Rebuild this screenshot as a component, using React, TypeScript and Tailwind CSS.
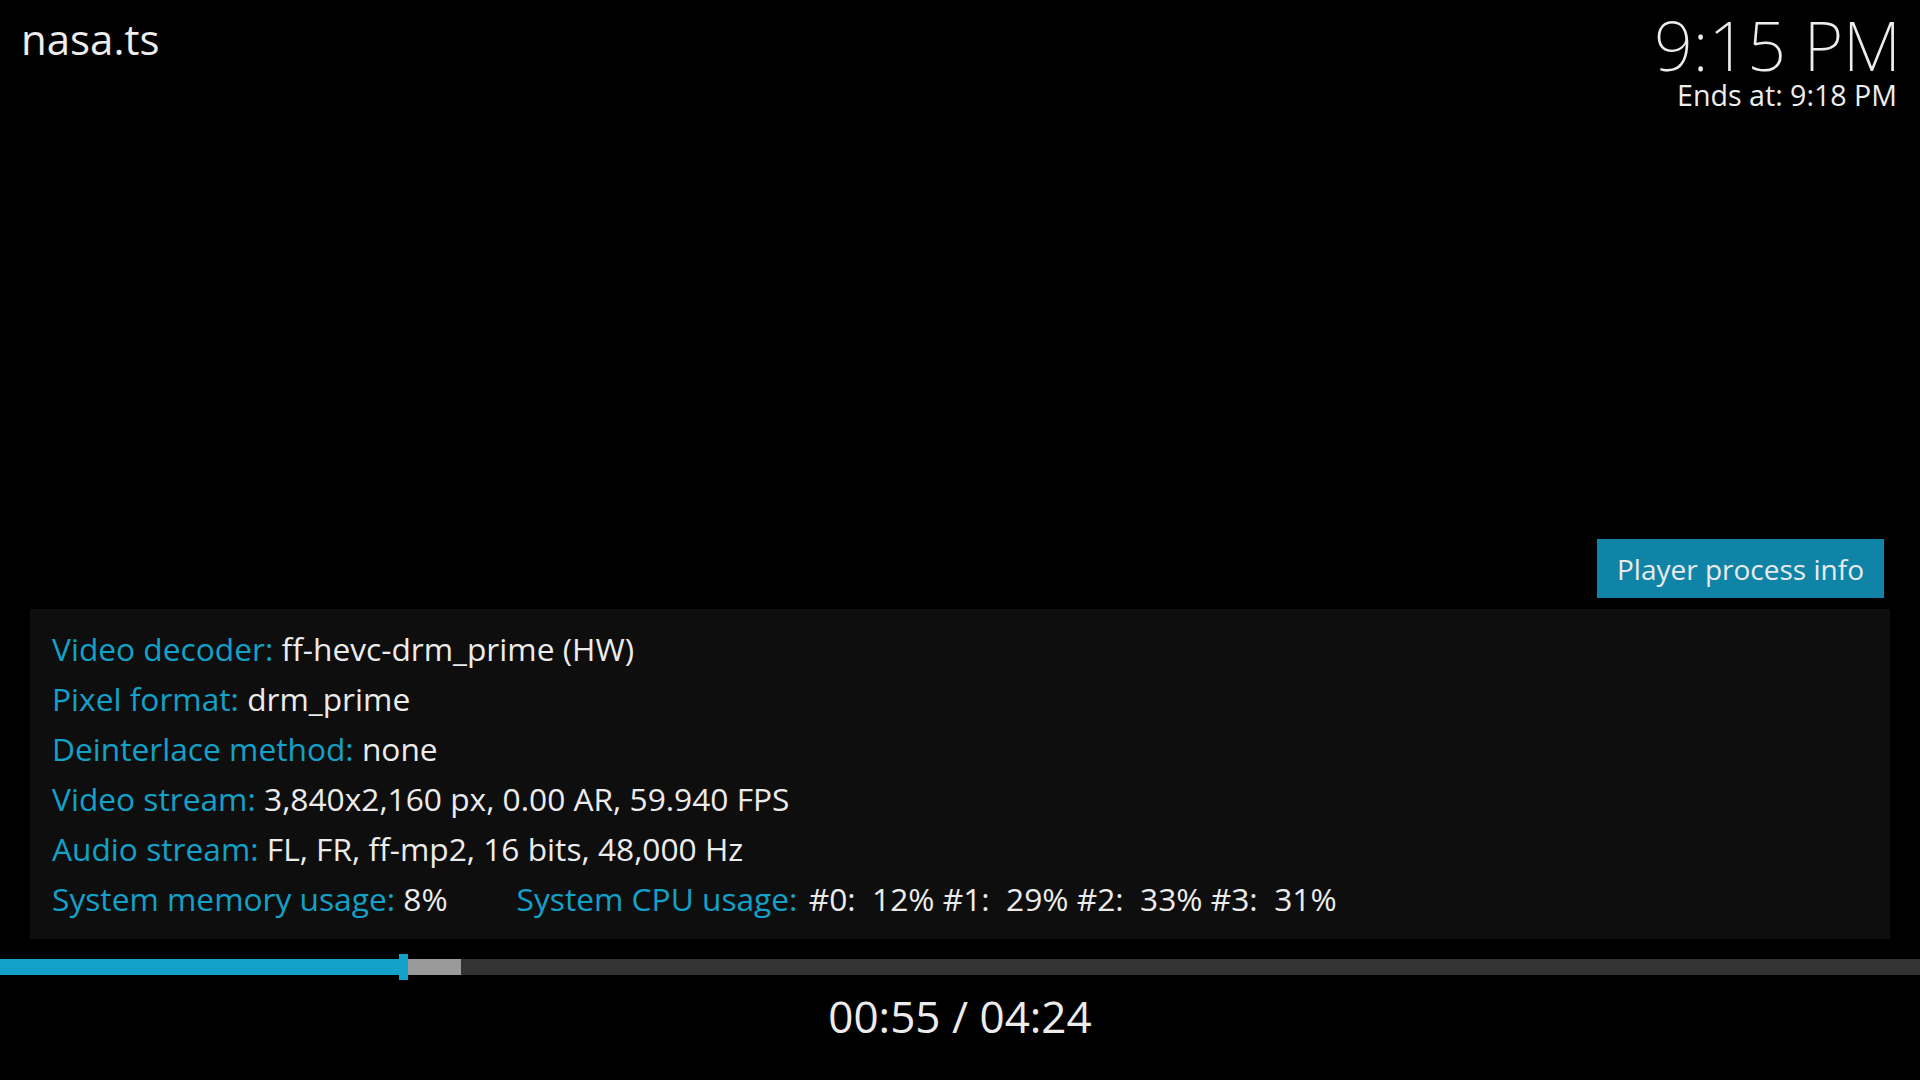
import React from "react";

const font = { fontFamily: '"Open Sans", "Noto Sans", sans-serif' };
const thin = { fontFamily: '"Noto Sans", "Open Sans", sans-serif' };

function Row({ label, value }: { label: string; value: string }) {
  return (
    <div className="h-[50px] flex items-center whitespace-pre">
      <span className="text-[#12a1c9]">{label}</span>
      <span className="text-[#ececec]"> {value}</span>
    </div>
  );
}

export default function App() {
  return (
    <div
      className="w-[1920px] h-[1080px] bg-black flex flex-col overflow-hidden"
      style={font}
    >
      <div className="flex justify-between items-start">
        <div className="pl-[21px] pt-[18px] text-[42px] leading-none text-[#ededed]">
          nasa.ts
        </div>
        <div className="pr-[23px] pt-[11px] flex flex-col items-end text-[#ededed]">
          <div className="text-[68px] leading-none font-extralight -mr-[4px]" style={thin}>
            9:15 PM
          </div>
          <div className="text-[28.6px] leading-none mt-[2px]">
            Ends at: 9:18 PM
          </div>
        </div>
      </div>

      <div className="flex-1" />

      <div className="flex justify-end pr-[36px]">
        <div className="w-[287px] h-[59px] bg-[#1084a7] flex items-center justify-center text-[28px] text-[#eaeaea]">
          Player process info
        </div>
      </div>

      <div className="mt-[11px] ml-[30px] w-[1860px] h-[330px] bg-[#0e0e0e] pl-[22px] pt-[15px] text-[31.7px]">
        <Row label="Video decoder:" value="ff-hevc-drm_prime (HW)" />
        <Row label="Pixel format:" value="drm_prime" />
        <Row label="Deinterlace method:" value="none" />
        <Row label="Video stream:" value="3,840x2,160 px, 0.00 AR, 59.940 FPS" />
        <Row label="Audio stream:" value="FL, FR, ff-mp2, 16 bits, 48,000 Hz" />
        <div className="h-[50px] flex items-center whitespace-pre">
          <span className="text-[#12a1c9]">System memory usage:</span>
          <span className="text-[#ececec]"> 8%</span>
          <span className="text-[#12a1c9] ml-[69px]">System CPU usage:</span>
          <span className="text-[#ececec] ml-[3px]"> #0:  12% #1:  29% #2:  33% #3:  31%</span>
        </div>
      </div>

      <div className="mt-[20px] relative h-[16px] w-full bg-[#333333] flex">
        <div className="w-[403px] h-full bg-[#12a1c9]" />
        <div className="w-[58px] h-full bg-[#999999]" />
        <div className="absolute left-[399px] -top-[5px] w-[9px] h-[26px] bg-[#12a1c9]" />
      </div>

      <div className="mt-[19px] pb-[42px] flex justify-center text-[44px] leading-none text-[#ececec]">
        00:55 / 04:24
      </div>
    </div>
  );
}
